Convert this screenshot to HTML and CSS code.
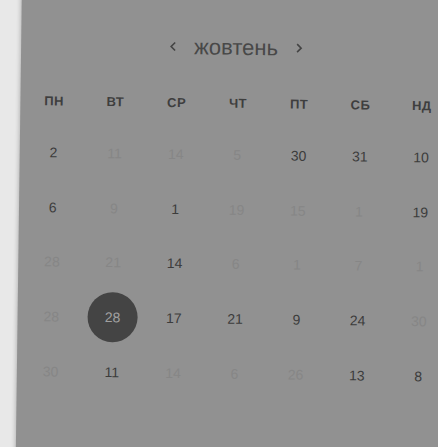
FILE: index.html
```html
<!DOCTYPE html>
<html lang="uk">
<head>
<meta charset="utf-8">
<title>Календар</title>
<link rel="stylesheet" href="styles.css">
</head>
<body>
<div class="stage">
<div class="panel">
  <div class="header">
    <span class="nav"><svg width="8" height="11" viewBox="0 0 8 11"><path d="M6 1.5 L2 5.5 L6 9.5" fill="none" stroke="#444" stroke-width="1.6"/></svg></span>
    <span class="title">жовтень</span>
    <span class="nav"><svg width="8" height="11" viewBox="0 0 8 11"><path d="M2 1.5 L6 5.5 L2 9.5" fill="none" stroke="#444" stroke-width="1.6"/></svg></span>
  </div>
  <div class="weekdays">
    <span>ПН</span><span>ВТ</span><span>СР</span><span>ЧТ</span><span>ПТ</span><span>СБ</span><span>НД</span>
  </div>
  <div class="days">
    <span class="d">2</span><span class="f">11</span><span class="f">14</span><span class="f">5</span><span class="d">30</span><span class="d">31</span><span class="d">10</span>
    <span class="d">6</span><span class="f">9</span><span class="d">1</span><span class="f">19</span><span class="f">15</span><span class="f">1</span><span class="d">19</span>
    <span class="f">28</span><span class="f">21</span><span class="d">14</span><span class="f">6</span><span class="f">1</span><span class="f">7</span><span class="f">1</span>
    <span class="f">28</span><span class="sel"><b>28</b></span><span class="d">17</span><span class="d">21</span><span class="d">9</span><span class="d">24</span><span class="f">30</span>
    <span class="f">30</span><span class="d">11</span><span class="f">14</span><span class="f">6</span><span class="f">26</span><span class="d">13</span><span class="d">8</span>
  </div>
</div>
</div>
</body>
</html>
```
FILE: styles.css
```css
html, body {
  margin: 0;
  padding: 0;
  overflow: hidden;
}
body {
  background: #e8e8e8;
  font-family: "Liberation Sans", Arial, sans-serif;
}
.stage {
  width: 438px;
  height: 447px;
  overflow: hidden;
}
.panel {
  margin-left: 22px;
  margin-top: -20px;
  width: 480px;
  height: 520px;
  background: #919191;
  box-shadow: -1px 0 4px rgba(0, 0, 0, 0.22);
  transform: rotate(0.75deg);
  transform-origin: 0 0;
  padding-left: 3px;
  box-sizing: border-box;
}
.header {
  width: 429px;
  height: 110px;
  box-sizing: border-box;
  padding-top: 20px;
  padding-right: 5px;
  display: flex;
  align-items: center;
  justify-content: center;
  gap: 17px;
}
.nav {
  display: flex;
  align-items: center;
  margin-top: -2px;
}
.title {
  font-size: 22px;
  color: #484848;
  line-height: 1;
}
.weekdays {
  width: 429px;
  height: 20px;
  display: grid;
  grid-template-columns: repeat(7, 1fr);
  align-items: center;
  justify-items: center;
  font-size: 13px;
  font-weight: bold;
  color: #3e3e3e;
  letter-spacing: 0.4px;
}
.days {
  width: 429px;
  margin-top: 15px;
  display: grid;
  grid-template-columns: repeat(7, 1fr);
  grid-auto-rows: 54.6px;
  align-items: center;
  justify-items: center;
  font-size: 14px;
}
.d { color: #3c3c3c; }
.f { color: #868686; }
.sel {
  width: 50px;
  height: 50px;
  border-radius: 50%;
  background: #444444;
  color: #a0a0a0;
  display: flex;
  align-items: center;
  justify-content: center;
}
.sel b { font-weight: normal; }
```
